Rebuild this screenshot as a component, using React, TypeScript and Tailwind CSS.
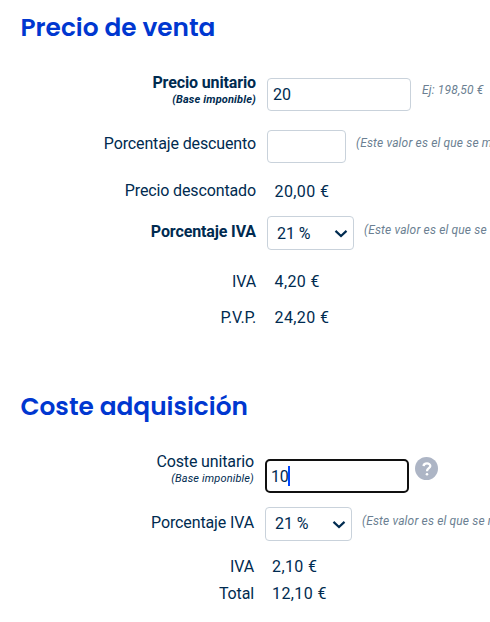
import React, { useState } from 'react';

type RowProps = {
  label: string;
  note?: string;
  bold?: boolean;
  className: string;
  labelClass: string;
  children: React.ReactNode;
};

const Row = ({ label, note, bold, className, labelClass, children }: RowProps) => (
  <div className={`flex items-start ${className}`}>
    <div className={`shrink-0 text-right text-[16px] leading-5 tracking-[-0.13px] whitespace-nowrap ${bold ? 'font-bold' : ''} ${labelClass}`}>
      {label}
      {note && <div className="text-[11px] leading-[14px] tracking-[0.15px] italic">{note}</div>}
    </div>
    {children}
  </div>
);

const Title = ({ children }: { children: React.ReactNode }) => (
  <h2 className="pl-[20.5px] h-10 leading-[41px] text-[24.8px] font-semibold whitespace-nowrap text-[#0037d0] font-['Poppins','Inter',sans-serif] [font-feature-settings:'cv11']">
    {children}
  </h2>
);

const Hint = ({ className, children }: { className: string; children: React.ReactNode }) => (
  <span className={`text-[12px] leading-4 tracking-[0.15px] italic whitespace-nowrap text-[#6b7f92] ${className}`}>{children}</span>
);

const Value = ({ className, children }: { className: string; children: React.ReactNode }) => (
  <span className={`text-[16px] leading-5 tracking-[0.4px] whitespace-nowrap ${className}`}>{children}</span>
);

const VatSelect = ({ textClass }: { textClass: string }) => (
  <button className="ml-[11px] mt-1 w-[87px] h-[34px] shrink-0 flex items-center justify-between pl-[9px] pr-[5px] bg-white border border-[#c9d2db] rounded-[4px] text-[16px]">
    <span className={`tracking-[-0.1px] ${textClass}`}>21 %</span>
    <svg width="14" height="10" viewBox="0 0 14 10" fill="none" stroke="#002b50" strokeWidth="2.2">
      <path d="M1.5 2.9 L7 8 L12.5 2.9" />
    </svg>
  </button>
);

export default function App() {
  const [price, setPrice] = useState('20');
  const [discount, setDiscount] = useState('');

  return (
    <div className="w-[490px] h-[622px] overflow-hidden bg-white pt-[7px] text-[#002b50] font-['Roboto',sans-serif]">
      {/* Venta */}
      <Title>Precio de venta</Title>
      <div className="pt-[25px]">
        <Row label="Precio unitario" note="(Base imponible)" bold className="h-[52px]" labelClass="w-64 mt-px">
          <input
            value={price}
            onChange={e => setPrice(e.target.value)}
            className="ml-[11px] mt-1.5 w-36 h-[33px] px-[5px] shrink-0 border border-[#c9d2db] rounded-[4px] text-[16px] outline-none"
          />
          <Hint className="ml-[11px] mt-2.5">Ej: 198,50 €</Hint>
        </Row>
        <Row label="Porcentaje descuento" className="h-[54px]" labelClass="w-64 mt-2.5">
          <input
            value={discount}
            onChange={e => setDiscount(e.target.value)}
            className="ml-[11px] mt-1.5 w-[79px] h-[33px] px-[5px] shrink-0 border border-[#c9d2db] rounded-[4px] text-[16px] outline-none"
          />
          <Hint className="ml-2.5 mt-[11px]">(Este valor es el que se m</Hint>
        </Row>
        <Row label="Precio descontado" className="h-[34px]" labelClass="w-64 mt-[3px]">
          <Value className="ml-[18.5px] mt-1">20,00 €</Value>
        </Row>
        <Row label="Porcentaje IVA" bold className="h-14" labelClass="w-64 mt-2.5">
          <VatSelect textClass="pt-0.5" />
          <Hint className="ml-2.5 mt-2.5">(Este valor es el que se</Hint>
        </Row>
        <Row label="IVA" className="h-9" labelClass="w-64 mt-1">
          <Value className="ml-[18.5px] mt-1">4,20 €</Value>
        </Row>
        <Row label="P.V.P." className="h-[46px]" labelClass="w-64 mt-1">
          <Value className="ml-[18.5px] mt-1">24,20 €</Value>
        </Row>
      </div>

      {/* Coste */}
      <div className="pt-9">
        <Title>Coste adquisición</Title>
      </div>
      <div className="pt-[25px]">
        <Row label="Coste unitario" note="(Base imponible)" className="h-[52px]" labelClass="w-[254px] mt-px">
          <div className="ml-[11px] mt-2 w-36 h-[34px] pl-1 shrink-0 flex items-center border-2 border-[#101010] rounded-[5px] text-[16px]">
            <span className="pt-px tracking-[-0.2px]">10</span>
            <span className="w-0.5 h-5 -ml-px bg-[#0046ff]" />
          </div>
          <span className="ml-1.5 mt-1.5 size-[23px] shrink-0 flex items-center justify-center rounded-full bg-[#adb5c5]">
            <svg width="10" height="14" viewBox="0 0 10 14" fill="none" stroke="#fff" strokeWidth="2.3">
              <path d="M1.6 4.1 C1.7 0.6 8.3 0.6 8.3 4 C8.3 6.3 5 6.2 5 9.2" />
              <circle cx="5" cy="12.2" r="1.3" fill="#fff" stroke="none" />
            </svg>
          </span>
        </Row>
        <Row label="Porcentaje IVA" className="h-[53px]" labelClass="w-[254px] mt-2.5">
          <VatSelect textClass="pt-0" />
          <Hint className="ml-2.5 mt-2.5">(Este valor es el que se m</Hint>
        </Row>
        <Row label="IVA" className="h-[27px]" labelClass="w-[254px] mt-px">
          <Value className="ml-[18px] mt-px">2,10 €</Value>
        </Row>
        <Row label="Total" className="h-[27px]" labelClass="w-[254px] mt-px">
          <Value className="ml-[18px] mt-px">12,10 €</Value>
        </Row>
      </div>
    </div>
  );
}
